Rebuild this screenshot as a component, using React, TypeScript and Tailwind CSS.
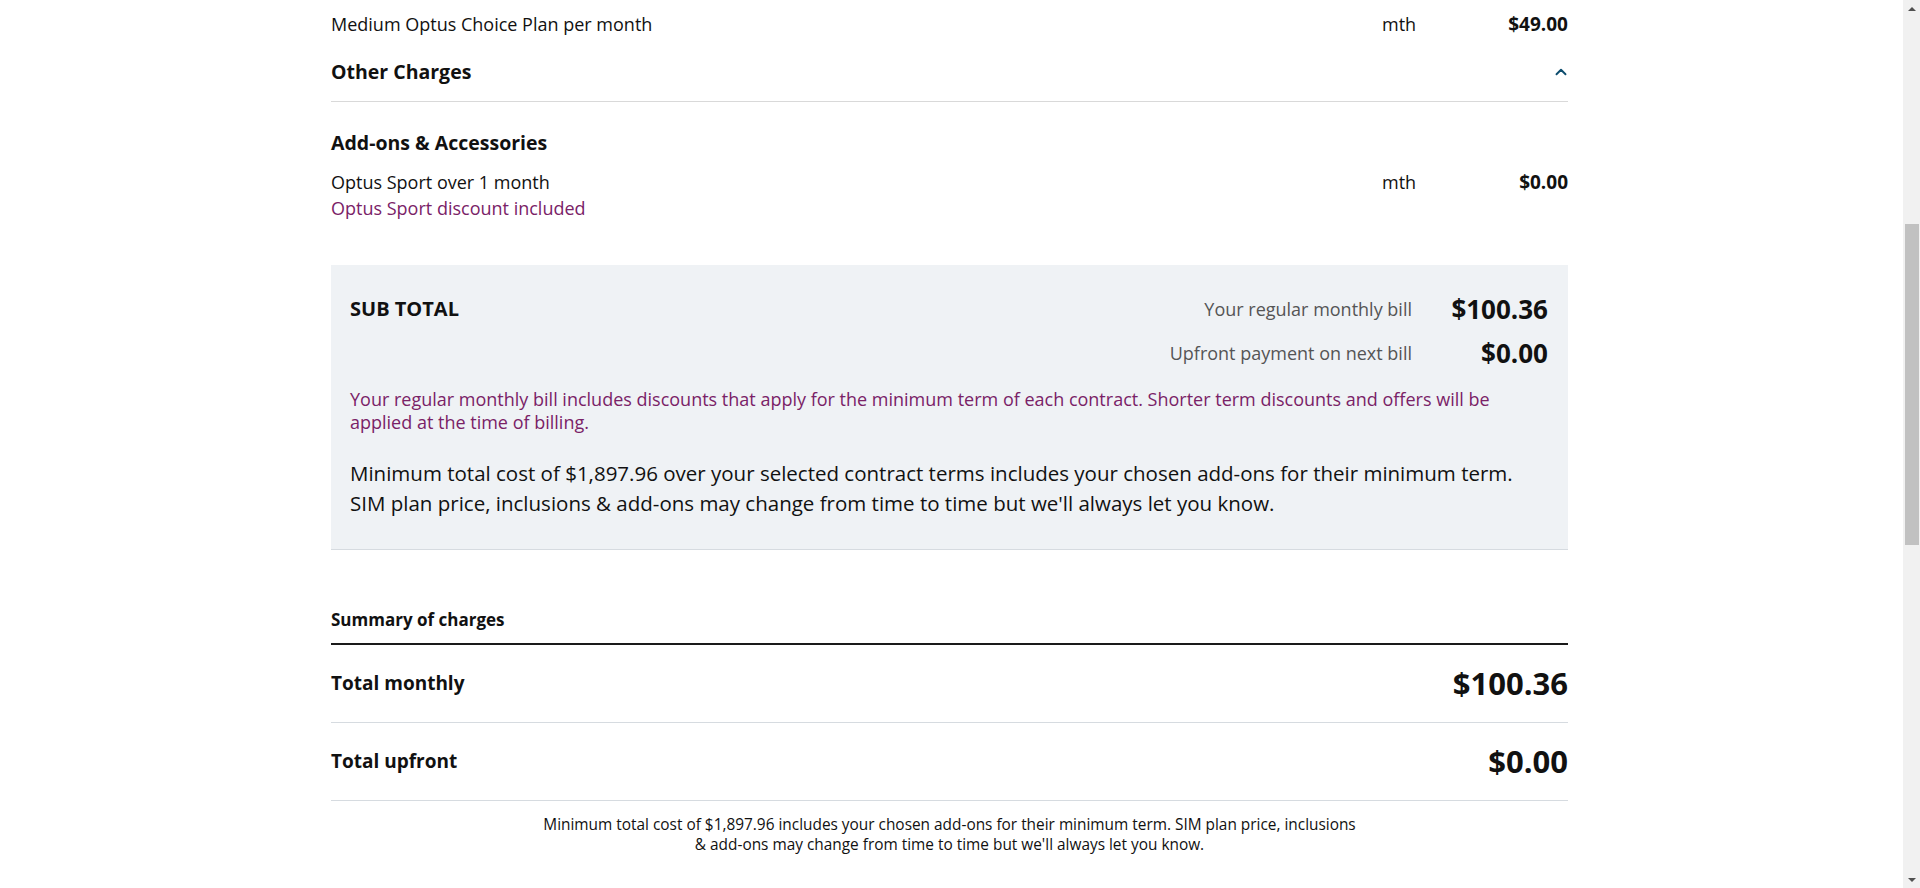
import { ChevronUp } from 'lucide-react';

const font = "font-['Open_Sans','Lato',sans-serif]";

interface ChargeRowProps {
  label: string;
  price: string;
  note?: string;
}

function ChargeRow({ label, price, note }: ChargeRowProps) {
  return (
    <div className="text-[18px] leading-[26px] text-[#111]">
      <div className="flex items-center">
        <p className="flex-1">{label}</p>
        <span className="w-[36px]">mth</span>
        <span className="w-[150px] text-right text-[19px] font-bold">{price}</span>
      </div>
      {note && <p className="text-[18px] text-[#7a2267]">{note}</p>}
    </div>
  );
}

function Scrollbar() {
  return (
    <div className="flex w-[17px] shrink-0 flex-col items-center bg-[#f1f1f1]">
      <div className="flex h-[17px] items-center justify-center">
        <div className="h-0 w-0 border-x-[4px] border-b-[4px] border-x-transparent border-b-[#505050]" />
      </div>
      <div className="h-[207px]" />
      <div className="h-[321px] w-[14px] bg-[#c1c1c1]" />
      <div className="flex-1" />
      <div className="flex h-[17px] items-center justify-center">
        <div className="h-0 w-0 border-x-[4px] border-t-[4px] border-x-transparent border-t-[#505050]" />
      </div>
    </div>
  );
}

export default function App() {
  return (
    <div className={`flex h-[888px] overflow-hidden bg-white ${font}`}>
      <main className="flex-1">
        <div className="mx-auto w-[1241px] pr-[4px]">
          <div className="flex h-[48px] items-center">
            <div className="flex-1">
              <ChargeRow label="Medium Optus Choice Plan per month" price="$49.00" />
            </div>
          </div>

          <div className="flex items-center justify-between border-b border-[#d9d9d9] pt-[12px] pb-[17px]">
            <h3 className="text-[19.5px] leading-[24px] font-bold text-[#111]">Other Charges</h3>
            <ChevronUp className="h-[18px] w-[18px] -mr-[2px] text-[#0d4d6e]" strokeWidth={2.5} />
          </div>

          <h3 className="mt-[27px] text-[19.5px] leading-[28px] font-bold text-[#111]">Add-ons &amp; Accessories</h3>
          <div className="mt-[12px]">
            <ChargeRow label="Optus Sport over 1 month" price="$0.00" note="Optus Sport discount included" />
          </div>

          <section className="mt-[44px] border-b border-[#d6dbe0] bg-[#eff2f5] pt-[28px] pr-[20px] pb-[31px] pl-[19px]">
            <div className="flex items-start justify-between">
              <h3 className="pt-[4px] text-[20px] leading-[24px] font-bold text-[#111]">SUB TOTAL</h3>
              <div className="grid grid-cols-[auto_120px] items-center gap-x-[16px] gap-y-[12px]">
                <span className="text-right text-[18px] text-[#555]">Your regular monthly bill</span>
                <span className="text-right text-[26px] leading-[32px] font-bold text-[#111]">$100.36</span>
                <span className="text-right text-[18px] text-[#555]">Upfront payment on next bill</span>
                <span className="text-right text-[26px] leading-[32px] font-bold text-[#111]">$0.00</span>
              </div>
            </div>
            <p className="mt-[19px] text-[18px] leading-[23px] text-[#7a2267]">
              Your regular monthly bill includes discounts that apply for the minimum term of each contract. Shorter term discounts and offers will be applied at the time of billing.
            </p>
            <p className="mt-[24px] text-[20.5px] leading-[30px] text-[#111]">
              Minimum total cost of $1,897.96 over your selected contract terms includes your chosen add-ons for their minimum term. SIM plan price, inclusions &amp; add-ons may change from time to time but we'll always let you know.
            </p>
          </section>

          <h4 className="mt-[58px] border-b-2 border-[#1a1a1a] pb-[11px] text-[17px] leading-[24px] font-bold text-[#111]">
            Summary of charges
          </h4>
          <div className="flex h-[78px] items-center justify-between border-b border-[#d6dbe0]">
            <span className="text-[19px] font-bold text-[#111]">Total monthly</span>
            <span className="text-[31px] font-bold text-[#111]">$100.36</span>
          </div>
          <div className="flex h-[78px] items-center justify-between border-b border-[#d6dbe0]">
            <span className="text-[19px] font-bold text-[#111]">Total upfront</span>
            <span className="text-[31px] font-bold text-[#111]">$0.00</span>
          </div>

          <p className="mx-auto mt-[14px] max-w-[822px] text-center text-[15.4px] leading-[20px] text-[#111]">
            Minimum total cost of $1,897.96 includes your chosen add-ons for their minimum term. SIM plan price, inclusions &amp; add-ons may change from time to time but we'll always let you know.
          </p>
        </div>
      </main>
      <Scrollbar />
    </div>
  );
}
